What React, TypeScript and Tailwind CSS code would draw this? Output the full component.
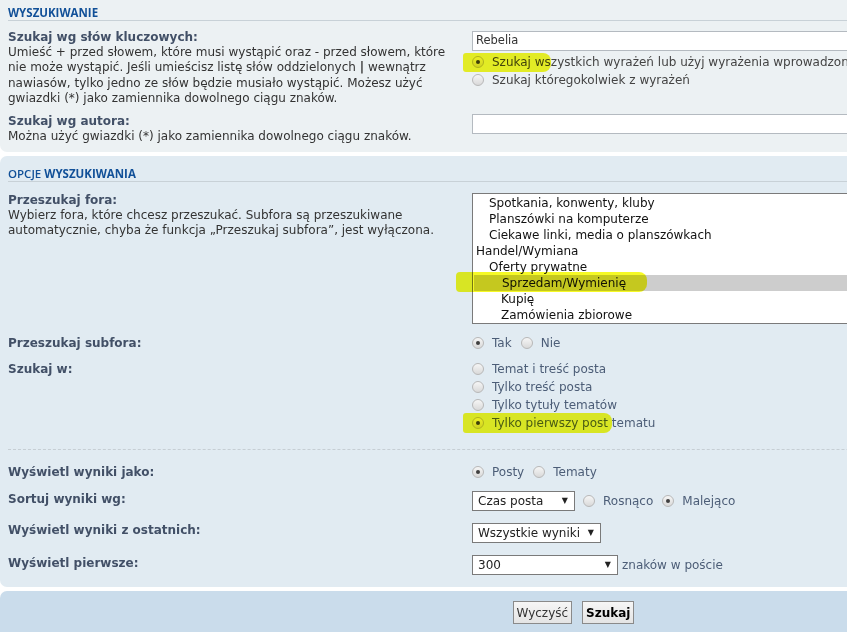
import React from 'react';

const Radio: React.FC<{ checked?: boolean }> = ({ checked }) => (
  <span className="flex items-center justify-center w-[12px] h-[12px] shrink-0 rounded-full border border-[#b8b8b8] bg-linear-to-b from-[#f6f6f6] to-[#d9d9d9]">
    {checked && <span className="w-[4px] h-[4px] rounded-full bg-[#3f3f3f]" />}
  </span>
);

const RadioOpt: React.FC<{ checked?: boolean; label: string; trail?: boolean }> = ({ checked, label, trail }) => (
  <label className={`flex items-center h-[18px] ${trail ? 'mr-[9px]' : ''}`}>
    <Radio checked={checked} />
    <span className="ml-2 whitespace-nowrap">{label}</span>
  </label>
);

const Select: React.FC<{ value: string; width: string }> = ({ value, width }) => (
  <div className={`flex items-center justify-between h-[20px] ${width} border border-[#7a7a7a] bg-white pl-[5px] pr-[6px] text-[12px] text-[#222]`}>
    <span>{value}</span>
    <span className="text-[8px] text-[#222]">▼</span>
  </div>
);

const forums: { name: string; level: number; selected?: boolean }[] = [
  { name: 'Spotkania, konwenty, kluby', level: 1 },
  { name: 'Planszówki na komputerze', level: 1 },
  { name: 'Ciekawe linki, media o planszówkach', level: 1 },
  { name: 'Handel/Wymiana', level: 0 },
  { name: 'Oferty prywatne', level: 1 },
  { name: 'Sprzedam/Wymienię', level: 2, selected: true },
  { name: 'Kupię', level: 2 },
  { name: 'Zamówienia zbiorowe', level: 2 },
];

const indent = ['pl-[3px]', 'pl-[16px]', 'pl-[28px]'];

export default function App() {
  return (
    <div className="relative w-[847px] h-[632px] overflow-hidden bg-white font-['DejaVu_Sans',Verdana,sans-serif] text-[12px] text-[#333]">
      <div className="w-[1147px] flex flex-col gap-[4px]">
        {/* Wyszukiwanie */}
        <div className="bg-[#ECF1F3] rounded-b-[7px] px-2 pt-[5px] pb-[8px]">
          <h3 className="font-['Open_Sans',Arial,sans-serif] font-bold text-[11.5px] leading-[15px] text-[#115098] border-b border-[#c8d1d7] uppercase">
            Wyszukiwanie
          </h3>
          <div className="grid grid-cols-[452px_1fr] gap-x-3 mt-[9px]">
            <div>
              <div className="text-[12px] font-bold leading-[15px] text-[#425067]">Szukaj wg słów kluczowych:</div>
              <div className="leading-[15.4px]">
                Umieść + przed słowem, które musi wystąpić oraz - przed słowem, które nie może wystąpić. Jeśli umieścisz listę słów oddzielonych <b>|</b> wewnątrz nawiasów, tylko jedno ze słów będzie musiało wystąpić. Możesz użyć gwiazdki (*) jako zamiennika dowolnego ciągu znaków.
              </div>
            </div>
            <div>
              <div className="mt-[1px] h-[20px] w-[450px] border border-[#b4bac0] bg-white pl-[3px] flex items-center text-[11.5px]">Rebelia</div>
              <div className="mt-[2px] text-[#444]">
                <RadioOpt checked label="Szukaj wszystkich wyrażeń lub użyj wyrażenia wprowadzonego" />
                <RadioOpt label="Szukaj któregokolwiek z wyrażeń" />
              </div>
            </div>
          </div>
          <div className="grid grid-cols-[452px_1fr] gap-x-3 mt-[7px]">
            <div>
              <div className="text-[12px] font-bold leading-[15px] text-[#425067]">Szukaj wg autora:</div>
              <div className="leading-[15.4px]">Można użyć gwiazdki (*) jako zamiennika dowolnego ciągu znaków.</div>
            </div>
            <div>
              <div className="h-[20px] w-[450px] border border-[#b4bac0] bg-white" />
            </div>
          </div>
        </div>

        {/* Opcje wyszukiwania */}
        <div className="bg-[#E1EBF2] rounded-[7px] px-2 pt-[10px] pb-[12px]">
          <h3 className="font-['Open_Sans',Arial,sans-serif] text-[11.5px] leading-[15px] text-[#115098] border-b border-[#c8d1d7] uppercase">
            <span className="font-semibold">Opcje</span> <span className="font-bold">wyszukiwania</span>
          </h3>
          <div className="grid grid-cols-[452px_1fr] gap-x-3 mt-[11px]">
            <div>
              <div className="text-[12px] font-bold leading-[15px] text-[#425067]">Przeszukaj fora:</div>
              <div className="leading-[15.4px]">
                Wybierz fora, które chcesz przeszukać. Subfora są przeszukiwane automatycznie, chyba że funkcja „Przeszukaj subfora”, jest wyłączona.
              </div>
            </div>
            <div className="h-[131px] w-[450px] border border-[#7a7a7a] bg-white py-[1px] text-[#111]">
              {forums.map((f) => (
                <div
                  key={f.name}
                  className={`h-[16px] leading-[16px] ${indent[f.level]} ${f.selected ? 'bg-[#cdcdcd] ml-[1px]' : ''}`}
                >
                  {f.name}
                </div>
              ))}
            </div>
          </div>

          <div className="grid grid-cols-[452px_1fr] gap-x-3 mt-[10px]">
            <div className="text-[12px] font-bold leading-[18px] text-[#425067]">Przeszukaj subfora:</div>
            <div className="flex text-[#4c5d77]">
              <RadioOpt checked label="Tak" trail />
              <RadioOpt label="Nie" />
            </div>
          </div>

          <div className="grid grid-cols-[452px_1fr] gap-x-3 mt-[8px]">
            <div className="text-[12px] font-bold leading-[18px] text-[#425067]">Szukaj w:</div>
            <div className="text-[#4c5d77]">
              <RadioOpt label="Temat i treść posta" />
              <RadioOpt label="Tylko treść posta" />
              <RadioOpt label="Tylko tytuły tematów" />
              <RadioOpt checked label="Tylko pierwszy post tematu" />
            </div>
          </div>

          <div className="mt-[17px] border-t border-dashed border-[#c6ced4]" />

          <div className="grid grid-cols-[452px_1fr] gap-x-3 mt-[13px]">
            <div className="text-[12px] font-bold leading-[18px] text-[#425067]">Wyświetl wyniki jako:</div>
            <div className="flex text-[#4c5d77]">
              <RadioOpt checked label="Posty" trail />
              <RadioOpt label="Tematy" />
            </div>
          </div>

          <div className="grid grid-cols-[452px_1fr] gap-x-3 mt-[10px]">
            <div className="text-[12px] font-bold leading-[16px] text-[#425067]">Sortuj wyniki wg:</div>
            <div className="flex items-center text-[#4c5d77]">
              <Select value="Czas posta" width="w-[103px]" />
              <span className="ml-[8px] flex">
                <RadioOpt label="Rosnąco" trail />
                <RadioOpt checked label="Malejąco" />
              </span>
            </div>
          </div>

          <div className="grid grid-cols-[452px_1fr] gap-x-3 mt-[12px]">
            <div className="text-[12px] font-bold leading-[14px] text-[#425067]">Wyświetl wyniki z ostatnich:</div>
            <div className="flex">
              <Select value="Wszystkie wyniki" width="w-[129px]" />
            </div>
          </div>

          <div className="grid grid-cols-[452px_1fr] gap-x-3 mt-[12px]">
            <div className="text-[12px] font-bold leading-[16px] text-[#425067]">Wyświetl pierwsze:</div>
            <div className="flex items-center text-[#4c5d77]">
              <Select value="300" width="w-[146px]" />
              <span className="ml-[4px]">znaków w poście</span>
            </div>
          </div>
        </div>

        {/* Przyciski */}
        <div className="bg-[#CADCEB] rounded-t-[7px] pt-[10px] h-[60px] flex justify-center items-start gap-[10px]">
          <button className="h-[23px] px-[3px] border border-[#8a8a8a] bg-linear-to-b from-[#f6f6f6] to-[#e4e4e4] text-[12px] text-[#333] font-['DejaVu_Sans',Verdana,sans-serif]">
            Wyczyść
          </button>
          <button className="h-[23px] px-[3px] border border-[#8a8a8a] bg-linear-to-b from-[#f6f6f6] to-[#e4e4e4] text-[12px] font-bold text-[#000] font-['DejaVu_Sans',Verdana,sans-serif]">
            Szukaj
          </button>
        </div>
      </div>

      {/* highlighter marks */}
      <div className="absolute left-[463px] top-[53px] w-[88px] h-[19px] rounded-r-[8px] rounded-l-[3px] bg-[#f4f800] mix-blend-multiply opacity-85" />
      <div className="absolute left-[456px] top-[272px] w-[191px] h-[20px] rounded-r-[8px] rounded-l-[4px] bg-[#f4f800] mix-blend-multiply opacity-85" />
      <div className="absolute left-[463px] top-[413px] w-[149px] h-[20px] rounded-r-[8px] rounded-l-[3px] bg-[#f4f800] mix-blend-multiply opacity-85" />
    </div>
  );
}
